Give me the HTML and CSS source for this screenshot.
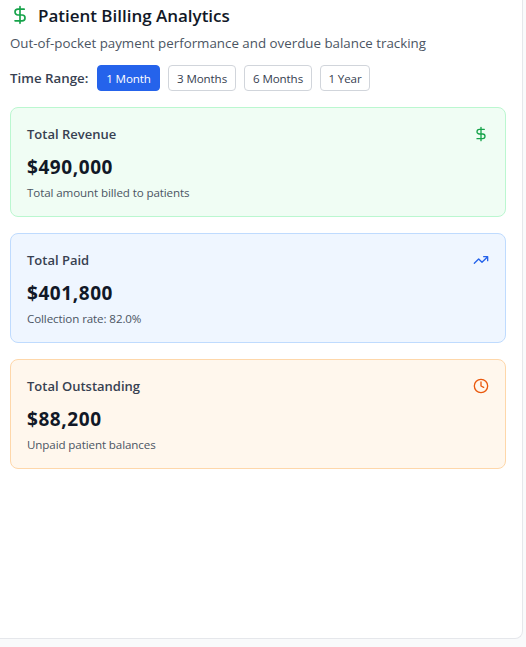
FILE: index.html
```html
<!DOCTYPE html>
<html lang="en">
<head>
<meta charset="utf-8">
<title>Patient Billing Analytics</title>
<link rel="stylesheet" href="styles.css">
</head>
<body>
<main class="panel">
  <header class="heading">
    <svg class="icon heading-icon green" viewBox="0 0 24 24"><path d="M12 2v20M17 5H9.5a3.5 3.5 0 0 0 0 7h5a3.5 3.5 0 0 1 0 7H6"/></svg>
    <h1>Patient Billing Analytics</h1>
  </header>
  <p class="subtitle">Out-of-pocket payment performance and overdue balance tracking</p>
  <div class="range">
    <span class="range-label">Time Range:</span>
    <button class="btn month active">1 Month</button>
    <button class="btn months">3 Months</button>
    <button class="btn months">6 Months</button>
    <button class="btn year">1 Year</button>
  </div>
  <section class="cards">
    <article class="card card-green">
      <div class="card-head"><h2>Total Revenue</h2>
        <svg class="icon green" viewBox="0 0 24 24"><path d="M12 2v20M17 5H9.5a3.5 3.5 0 0 0 0 7h5a3.5 3.5 0 0 1 0 7H6"/></svg></div>
      <p class="value">$490,000</p>
      <p class="note">Total amount billed to patients</p>
    </article>
    <article class="card card-blue">
      <div class="card-head"><h2>Total Paid</h2>
        <svg class="icon blue" viewBox="0 0 24 24"><path d="M22 7l-8.5 8.5-5-5L2 17M16 7h6v6"/></svg></div>
      <p class="value">$401,800</p>
      <p class="note">Collection rate: 82.0%</p>
    </article>
    <article class="card card-orange">
      <div class="card-head"><h2>Total Outstanding</h2>
        <svg class="icon orange" viewBox="0 0 24 24"><circle cx="12" cy="12" r="10"/><path d="M12 6v6l4 2"/></svg></div>
      <p class="value">$88,200</p>
      <p class="note">Unpaid patient balances</p>
    </article>
  </section>
</main>
</body>
</html>
```
FILE: styles.css
```css
* { box-sizing: border-box; margin: 0; }
body {
  height: 647px;
  overflow: hidden;
  background: #f9fafb;
  color: #111827;
  font-family: "Open Sans", "Noto Sans", sans-serif;
}
.panel {
  width: 523px;
  height: 639px;
  padding: 1px 16px 0 10px;
  background: #fff;
  border: solid #e5e7eb;
  border-width: 0 1px 1px 0;
  border-bottom-right-radius: 8px;
}
.icon {
  width: 16px;
  height: 16px;
  flex: none;
  fill: none;
  stroke: currentColor;
  stroke-width: 2;
  stroke-linecap: round;
  stroke-linejoin: round;
}
.heading-icon { width: 20px; height: 20px; }
.green { color: #16a34a; }
.blue { color: #2563eb; }
.orange { color: #ea580c; }
.heading { display: flex; align-items: center; gap: 8px; height: 28px; }
h1 { padding-top: 2px; font-size: 17px; line-height: 26px; font-weight: 600; letter-spacing: -0.02px; }
.subtitle { margin-top: 4px; font-size: 13.33px; line-height: 20px; color: #4b5563; }
.range { display: flex; align-items: center; gap: 8px; margin-top: 12px; height: 26px; white-space: nowrap; }
.range-label { width: 79px; font-size: 13.3px; line-height: 20px; font-weight: 600; color: #374151; }
.btn {
  height: 26px;
  padding: 2px 0 0;
  border: 1px solid #d1d5db;
  border-radius: 4px;
  background: #fff;
  color: #374151;
  font: 400 11.6px/16px "Open Sans", "Noto Sans", sans-serif;
  letter-spacing: -0.1px;
}
.month { width: 63px; }
.months { width: 68px; }
.year { width: 50px; }
.active { background: #2563eb; border-color: #2563eb; color: #fff; }
.cards { display: grid; gap: 16px; margin-top: 16px; }
.card { height: 110px; padding: 16px; border: 1px solid; border-radius: 8px; }
.card-green { background: #f0fdf4; border-color: #bbf7d0; }
.card-blue { background: #eff6ff; border-color: #bfdbfe; }
.card-orange { background: #fff7ed; border-color: #fed7aa; }
.card-head { display: flex; align-items: center; justify-content: space-between; margin-bottom: 8px; }
h2 { font-size: 13px; line-height: 20px; font-weight: 600; color: #374151; }
.value { padding-top: 1px; font-size: 19px; line-height: 28px; font-weight: 700; letter-spacing: 0.57px; }
.note { margin-top: 4px; font-size: 11.6px; line-height: 16px; letter-spacing: -0.11px; color: #4b5563; }
```
